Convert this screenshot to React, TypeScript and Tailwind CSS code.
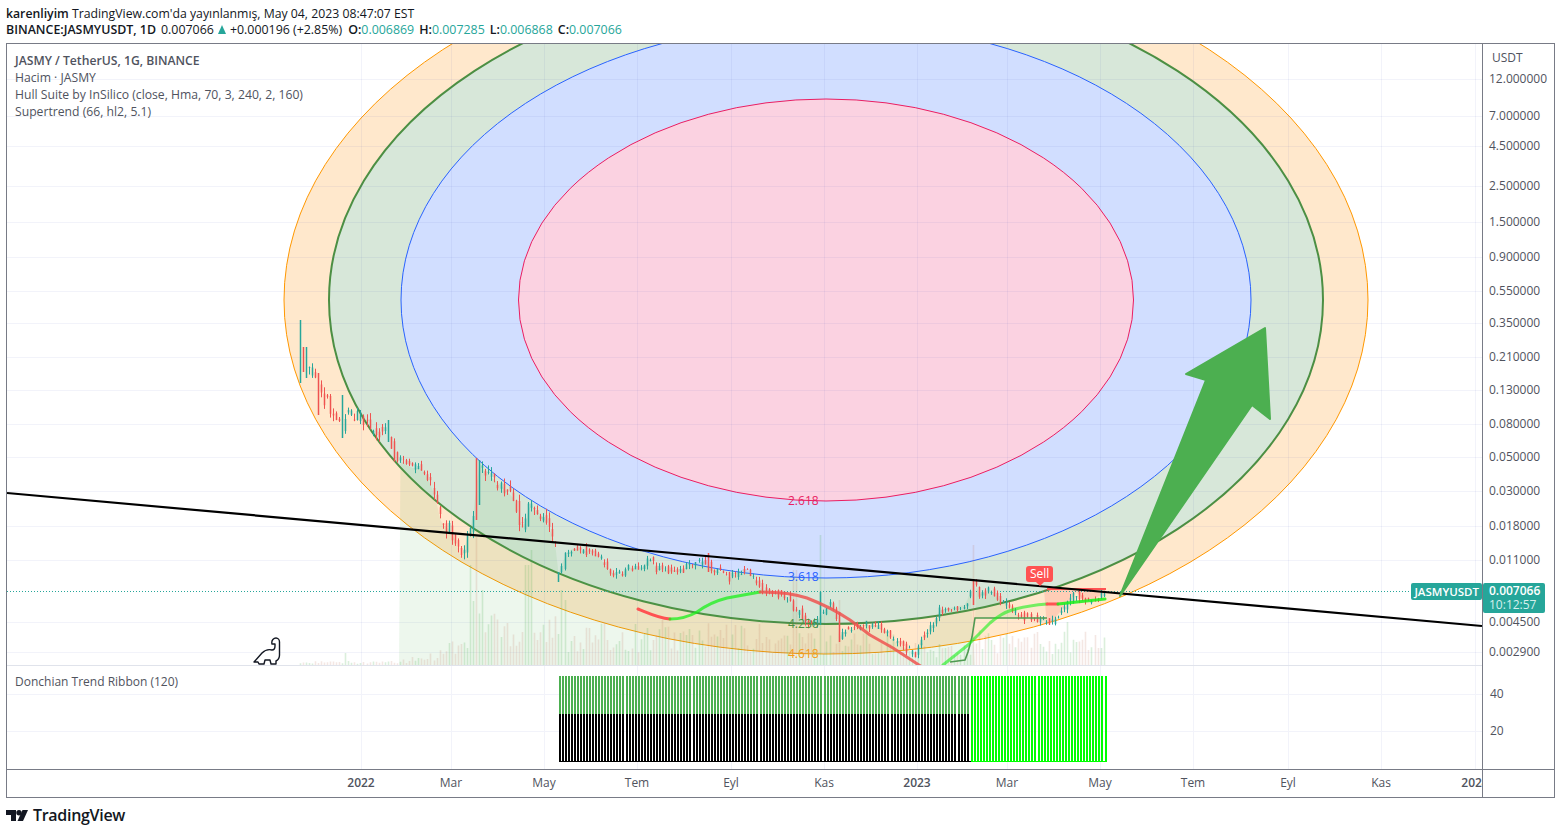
import React from "react";

const FONT = "font-['Open_Sans','Noto_Sans',sans-serif]";

const priceTicks = [
  { y: 79, label: "12.000000" },
  { y: 116, label: "7.000000" },
  { y: 146, label: "4.500000" },
  { y: 186, label: "2.500000" },
  { y: 222, label: "1.500000" },
  { y: 257, label: "0.900000" },
  { y: 291, label: "0.550000" },
  { y: 323, label: "0.350000" },
  { y: 357, label: "0.210000" },
  { y: 390, label: "0.130000" },
  { y: 424, label: "0.080000" },
  { y: 457, label: "0.050000" },
  { y: 491, label: "0.030000" },
  { y: 526, label: "0.018000" },
  { y: 560, label: "0.011000" },
  { y: 622, label: "0.004500" },
  { y: 652, label: "0.002900" },
  // ribbon pane scale
  { y: 694, label: "40" },
  { y: 731, label: "20" },
];
const mainTicks = priceTicks.slice(0, 17);

const timeTicks = [
  { x: 361, label: "2022", bold: true },
  { x: 451, label: "Mar" },
  { x: 544, label: "May" },
  { x: 637, label: "Tem" },
  { x: 731, label: "Eyl" },
  { x: 824, label: "Kas" },
  { x: 917, label: "2023", bold: true },
  { x: 1007, label: "Mar" },
  { x: 1100, label: "May" },
  { x: 1193, label: "Tem" },
  { x: 1288, label: "Eyl" },
  { x: 1381, label: "Kas" },
  { x: 1475, label: "2024", bold: true },
];

// price path read off the chart, page coordinates
const pricePath: [number, number][] = [
  [300, 352], [306, 365], [310, 372], [316, 372], [318, 385], [322, 400], [326, 398], [330, 410],
  [338, 422], [342, 428], [346, 412], [350, 416], [360, 418], [370, 428], [380, 432], [388, 432],
  [392, 446], [395, 457], [405, 464], [412, 468], [420, 468], [425, 472], [430, 482], [435, 498],
  [440, 520], [443, 525], [450, 530], [455, 540], [460, 555], [462, 560], [465, 545], [470, 530],
  [475, 505], [478, 470], [480, 462], [484, 470], [490, 476], [500, 484], [505, 490], [515, 500],
  [520, 525], [525, 525], [530, 502], [535, 510], [545, 518], [550, 530], [555, 540], [559, 574],
  [565, 556], [572, 548], [580, 550], [590, 552], [600, 558], [610, 572], [620, 575], [630, 567],
  [640, 570], [650, 558], [655, 568], [670, 570], [680, 572], [690, 565], [700, 562], [707, 560],
  [712, 570], [720, 572], [730, 578], [745, 568], [750, 572], [755, 578], [762, 590], [770, 592],
  [785, 596], [790, 600], [795, 612], [800, 612], [805, 620], [815, 622], [825, 612], [830, 602],
  [835, 610], [838, 638], [845, 630], [860, 625], [875, 625], [885, 630], [895, 642], [905, 648],
  [915, 654], [920, 640], [930, 628], [940, 610], [950, 608], [965, 605], [970, 592], [974, 582],
  [980, 595], [990, 590], [1000, 600], [1010, 608], [1020, 616], [1030, 618], [1040, 620], [1050, 623],
  [1060, 612], [1070, 600], [1077, 592], [1085, 602], [1095, 598], [1106, 592],
];

// long single candles that stand out: x, top, bottom, up
const specials: [number, number, number, boolean][] = [
  [300, 320, 383, true],
  [303, 347, 372, false],
  [306, 347, 378, true],
  [318, 373, 415, false],
  [344, 395, 438, true],
  [388, 420, 442, true],
  [477, 458, 520, false],
  [480, 460, 505, true],
  [559, 572, 582, true],
  [707, 553, 572, false],
  [822, 592, 625, true],
  [838, 612, 642, false],
  [974, 579, 605, false],
];

// tall volume spikes: x, top y
const volumeSpikes: [number, number][] = [
  [345, 653], [472, 565], [477, 537], [483, 590], [527, 565], [531, 550], [562, 590], [565, 600],
  [662, 620], [795, 570], [822, 535], [838, 600], [868, 620], [972, 545], [980, 630], [1068, 622],
];

const rand = (seed: number) => {
  const v = Math.sin(seed * 127.1) * 43758.5453;
  return v - Math.floor(v);
};

const priceAt = (x: number) => {
  for (let i = 1; i < pricePath.length; i++) {
    const [x0, y0] = pricePath[i - 1];
    const [x1, y1] = pricePath[i];
    if (x <= x1) return y0 + ((y1 - y0) * (x - x0)) / (x1 - x0 || 1);
  }
  return pricePath[pricePath.length - 1][1];
};

const PITCH = 3.046;

const candles = Array.from({ length: 265 }, (_, i) => {
  const raw = 300 + i * PITCH;
  const x = Math.floor(raw) + 0.5;
  const size = raw < 400 || (raw > 430 && raw < 560) ? 13 : 8;
  const open = priceAt(raw - PITCH) + (rand(i) - 0.5) * size;
  const close = priceAt(raw) + (rand(i + 900) - 0.5) * size;
  const top = Math.min(open, close) - rand(i + 300) * size * 0.5;
  const bottom = Math.max(open, close) + rand(i + 600) * size * 0.5;
  const special = specials.find(([sx]) => Math.abs(sx - raw) < 1.6);
  if (special) {
    return { x, raw, i, open: special[1], close: special[2], top: special[1], bottom: special[2], up: special[3] };
  }
  return { x, raw, i, open, close, top, bottom, up: close < open };
});

const volumeTop = (x: number, i: number) => {
  const spike = volumeSpikes.find(([sx]) => Math.abs(sx - x) < 1.6);
  if (spike) return spike[1];
  let h = 4;
  if (x >= 400) h = 5 + (x - 400) * 0.25;
  if (x >= 440) h = 28;
  if (x >= 470) h = 72;
  if (x >= 500) h = 52;
  if (x >= 560) h = 42;
  if (x >= 760) h = 36;
  if (x >= 900) h = 24;
  if (x >= 975) h = 34;
  return 665 - h * (0.3 + rand(i + 50) * 0.7);
};

const upCandles = candles.filter((c) => c.up);
const downCandles = candles.filter((c) => !c.up);
const wicks = (list: typeof candles) =>
  list.map((c) => `M${c.x} ${c.top.toFixed(1)}V${c.bottom.toFixed(1)}`).join("");
const bodies = (list: typeof candles) =>
  list.map((c) => `M${c.x} ${Math.min(c.open, c.close).toFixed(1)}V${Math.max(c.open, c.close).toFixed(1)}`).join("");
const volumes = (list: typeof candles) =>
  list.map((c) => `M${c.x} 665V${volumeTop(c.raw, c.i).toFixed(1)}`).join("");

const topLine = (from: number, to: number) =>
  candles
    .filter((c) => c.x >= from && c.x <= to)
    .map((c) => `${c.x},${priceAt(c.raw).toFixed(1)}`)
    .join(" ");

const ribbonOld = Array.from({ length: 135 }, (_, i) => Math.floor(559 + i * PITCH) + 1);
const ribbonNew = Array.from({ length: 45 }, (_, i) => Math.floor(971 + i * PITCH) + 1);

function MainPane() {
  return (
    <svg viewBox="7 44 1475 621" className="block h-full w-full">
      <ellipse cx="826" cy="300" rx="542" ry="354" fill="#ffe8cc" stroke="#ff9800" />
      <ellipse cx="826" cy="300" rx="497" ry="324" fill="#d7e7d9" stroke="#4c8f43" strokeWidth="2" />
      <ellipse cx="826" cy="300" rx="425" ry="278" fill="#d1deff" stroke="#2962ff" />
      <ellipse cx="826" cy="300" rx="307.5" ry="201" fill="#fbd2e1" stroke="#e91e63" />

      {mainTicks.map((t) => (
        <path key={t.y} d={`M7 ${t.y + 0.5}H1482`} stroke="#4553b8" strokeOpacity="0.07" />
      ))}
      {timeTicks.map((t) => (
        <path key={t.x} d={`M${t.x + 0.5} 44V665`} stroke="#4553b8" strokeOpacity="0.07" />
      ))}

      <polygon points={`399,665 ${topLine(399, 972)} 975,665`} fill="#4caf50" fillOpacity="0.1" />
      <polygon points={`975,618 ${topLine(975, 1047)} 1047,618`} fill="#4caf50" fillOpacity="0.1" />
      <polygon
        points={`1044,589 1106,589 ${topLine(1044, 1106).split(" ").reverse().join(" ")}`}
        fill="#ff5252"
        fillOpacity="0.18"
      />

      <path d={volumes(upCandles)} stroke="#4caf50" strokeOpacity="0.2" strokeWidth="1.6" fill="none" />
      <path d={volumes(downCandles)} stroke="#c0705a" strokeOpacity="0.17" strokeWidth="1.6" fill="none" />

      <path d="M7 591.5H1410" stroke="#26a69a" strokeWidth="1" strokeDasharray="1 2" />

      <path d={wicks(upCandles)} stroke="#26a69a" strokeWidth="1" fill="none" />
      <path d={wicks(downCandles)} stroke="#ef5350" strokeWidth="1" fill="none" />
      <path d={bodies(upCandles)} stroke="#26a69a" strokeWidth="1.5" fill="none" />
      <path d={bodies(downCandles)} stroke="#ef5350" strokeWidth="1.5" fill="none" />

      <path d="M950 662L965 660L968 652L972 637L975 618H1047" stroke="#4f9a52" strokeWidth="1.6" fill="none" />
      <path d="M1047 589H1106" stroke="#ff5252" strokeWidth="2" fill="none" />

      <g fill="none" strokeWidth="3" strokeLinecap="round" strokeLinejoin="round">
        <path d="M638 609C648 613 658 618 670 619" stroke="#ff5252" />
        <path d="M670 619C680 619 690 616 697 612C705 606 715 601 727 598L760 592" stroke="#19f019" strokeOpacity="0.75" />
        <path d="M760 592C775 592 795 594 807 598C825 605 838 612 850 620L870 635L893 648L922 667" stroke="#ef5350" strokeOpacity="0.85" />
        <path d="M943 665L968 645L990 623C998 616 1005 612 1012 610C1022 607 1035 605 1047 604" stroke="#19f019" strokeOpacity="0.6" />
        <path d="M1047 604H1058" stroke="#ff5252" />
        <path d="M1058 604L1105 599" stroke="#19f019" strokeOpacity="0.85" />
      </g>

      <path d="M7 493L1482 626" stroke="#000" strokeWidth="2.2" />

      <path
        d="M1120 596L1206 380L1186 374L1265 328L1270 419L1252 405Z"
        fill="#4caf50"
        stroke="#4caf50"
        strokeWidth="2"
        strokeLinejoin="round"
      />

      <path
        d="M254 662L262 653C265 650 268 649 272 650C274 650 275 648 275 646V644H272C271 640 274 638 276 638C278 638 279.5 640 279.5 642V655C279.5 658 278 660 276 661V664H271L270 660H265L264 664H259L258 662Z"
        fill="#fff"
        stroke="#131722"
        strokeWidth="1.4"
        strokeLinejoin="round"
      />
    </svg>
  );
}

function RibbonPane() {
  const bars = (list: number[], y0: number, y1: number) => list.map((x) => `M${x} ${y0}V${y1}`).join("");
  return (
    <svg viewBox="7 666 1475 103" className="block h-full w-full">
      <path d="M7 694.5H1482M7 731.5H1482" stroke="#f2f3fa" />
      {timeTicks.map((t) => (
        <path key={t.x} d={`M${t.x + 0.5} 666V769`} stroke="#f2f3fa" />
      ))}
      <path d={bars(ribbonOld, 676, 714)} stroke="#4caf50" strokeWidth="2" />
      <path d={bars(ribbonOld, 714, 761)} stroke="#000" strokeWidth="2" />
      <path d="M559 761.5H971" stroke="#000" strokeWidth="1" />
      <path d={bars(ribbonNew, 676, 761)} stroke="#00ff00" strokeWidth="2" />
      <path d="M971 761.5H1107" stroke="#00ff00" strokeWidth="1" />
    </svg>
  );
}

function PriceAxis() {
  return (
    <div className="relative flex w-[72px] shrink-0 flex-col border-l border-[#787b86] pl-[6px] text-[12px] leading-[14px] text-[#50535e]">
      <div className="mt-[7px] h-[14px] shrink-0 pl-[3px]">USDT</div>
      {priceTicks.map((t, i) => (
        <div
          key={t.y}
          className={`shrink-0 ${t.label.length === 2 ? "pl-[1px]" : ""}`}
          style={{ marginTop: i === 0 ? t.y - 72 : t.y - priceTicks[i - 1].y - 14 }}
        >
          {t.label}
        </div>
      ))}
      <div className="absolute left-0 top-[539px] w-[62px] rounded-[2px] bg-[#26a69a] pl-[6px] text-white">
        <div className="pt-[1px] font-semibold leading-[14px]">0.007066</div>
        <div className="pb-[1px] leading-[14px] text-[#d6f0ed]">10:12:57</div>
      </div>
      <div className="absolute right-[72px] top-[539px] rounded-[2px] bg-[#26a69a] px-[3px] text-[11.5px] font-semibold leading-[17px] text-white">
        JASMYUSDT
      </div>
    </div>
  );
}

export default function App() {
  return (
    <div className={`h-[834px] w-[1561px] overflow-hidden bg-white ${FONT}`}>
      <div className="px-[6px] pt-[5px] leading-[17px] text-[#131722]">
        <div className="h-[16px] text-[12.25px]">
          <span className="font-semibold">karenliyim</span> TradingView.com'da yayınlanmış, May 04, 2023 08:47:07 EST
        </div>
        <div className="flex h-[17px] items-center text-[12.4px]">
          <span className="font-semibold">BINANCE:JASMYUSDT, 1D</span>
          <span className="ml-[5px]">0.007066</span>
          <span className="mx-[4px] h-0 w-0 border-x-[4px] border-b-[9px] border-x-transparent border-b-[#26a69a]" />
          <span>+0.000196 (+2.85%)</span>
          <span className="ml-[6px] font-semibold">O:</span>
          <span className="text-[#26a69a]">0.006869</span>
          <span className="ml-[5px] font-semibold">H:</span>
          <span className="text-[#26a69a]">0.007285</span>
          <span className="ml-[5px] font-semibold">L:</span>
          <span className="text-[#26a69a]">0.006868</span>
          <span className="ml-[5px] font-semibold">C:</span>
          <span className="text-[#26a69a]">0.007066</span>
        </div>
      </div>

      <div className="mx-[6px] mt-[5px] flex h-[755px] w-[1549px] flex-col border border-[#787b86]">
        <div className="flex min-h-0 flex-1">
          <div className="flex w-[1475px] shrink-0 flex-col">
            <div className="relative h-[621px] shrink-0">
              <MainPane />
              <div className="absolute left-[8px] top-[8px] text-[12.2px] leading-[17px] text-[#50535e]">
                <div className="font-semibold">JASMY / TetherUS, 1G, BINANCE</div>
                <div>Hacim · JASMY</div>
                <div>Hull Suite by InSilico (close, Hma, 70, 3, 240, 2, 160)</div>
                <div>Supertrend (66, hl2, 5.1)</div>
              </div>
              <span className="absolute left-[781px] top-[448px] text-[12px] text-[#e91e63]">2.618</span>
              <span className="absolute left-[781px] top-[524px] text-[12px] text-[#2962ff]">3.618</span>
              <span className="absolute left-[781px] top-[571px] text-[12px] text-[#4c8f43]">4.236</span>
              <span className="absolute left-[781px] top-[601px] text-[12px] text-[#f59c1a]">4.618</span>
              <div className="absolute left-[1019px] top-[522px] rounded-[3px] bg-[#ff5252] px-[4px] text-[12px] leading-[16px] text-white">
                Sell
                <span className="absolute left-[10px] top-[16px] h-0 w-0 border-x-[4px] border-t-[4px] border-x-transparent border-t-[#ff5252]" />
              </div>
            </div>
            <div className="relative h-[104px] shrink-0 border-t border-[#e0e3eb]">
              <RibbonPane />
              <div className="absolute left-[8px] top-[7px] text-[12px] leading-[17px] text-[#50535e]">Donchian Trend Ribbon (120)</div>
            </div>
          </div>
          <PriceAxis />
        </div>
        <div className="flex h-[28px] shrink-0 border-t border-[#787b86] text-[12px] text-[#50535e]">
          <div className="flex w-[1475px] shrink-0 items-center overflow-hidden pb-[2px]">
            {timeTicks.map((t, i) => (
              <div
                key={t.x}
                className={`flex shrink-0 translate-x-[15px] justify-end ${t.bold ? "font-semibold" : ""}`}
                style={{ width: t.x - (i === 0 ? 7 : timeTicks[i - 1].x) }}
              >
                <span className="w-[30px] text-center">{t.label}</span>
              </div>
            ))}
          </div>
          <div className="flex-1 border-l border-[#787b86]" />
        </div>
      </div>

      <div className="flex h-[34px] items-center gap-[5px] pl-[6px]">
        <svg viewBox="0 0 22 11" className="h-[11px] w-[22px]" fill="#131722">
          <path d="M0 0H10V11H5V5H0Z" />
          <circle cx="13" cy="2.8" r="2.7" />
          <path d="M22 0L17 11H11.5L16.5 0Z" />
        </svg>
        <span className="text-[16px] font-semibold tracking-[-0.3px] text-[#131722]">TradingView</span>
      </div>
    </div>
  );
}
